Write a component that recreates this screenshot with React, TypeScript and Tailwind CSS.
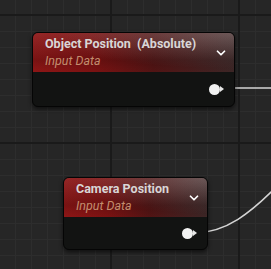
import { ChevronDown } from "lucide-react";

type NodeProps = {
  title: string;
  subtitle: string;
  className: string;
};

function Pin() {
  return (
    <div className="flex items-center">
      <div className="w-[11px] h-[11px] rounded-full bg-[#f2f2f2]" />
      <div className="w-0 h-0 border-y-[3px] border-y-transparent border-l-[4px] border-l-[#e8e8e8]" />
    </div>
  );
}

function MaterialNode({ title, subtitle, className }: NodeProps) {
  return (
    <div
      className={`absolute flex flex-col rounded-[6px] border border-[#050505] bg-[#121312] shadow-[0_2px_4px_rgba(0,0,0,0.6)] ${className}`}
    >
      {/* Header */}
      <div className="relative h-[39px] shrink-0 rounded-t-[5px] overflow-hidden flex items-center justify-between pl-[12px] pr-[6px] bg-[linear-gradient(to_right,#8e1616_0%,#7c1212_30%,#521414_60%,#3c2626_100%)]">
        <div className="absolute inset-0 bg-[radial-gradient(ellipse_at_100%_0%,rgba(140,120,120,0.45),transparent_65%)]" />
        <div className="absolute inset-0 bg-[linear-gradient(to_bottom,rgba(255,255,255,0.07),rgba(0,0,0,0.15)_70%,transparent)]" />
        <div className="relative flex flex-col leading-none">
          <span className="font-['Roboto',sans-serif] font-bold text-[12.5px] text-[#d9d6d6] whitespace-pre">
            {title}
          </span>
          <span className="mt-[4px] font-['Roboto',sans-serif] italic text-[12.5px] text-[#c38d6e]">
            {subtitle}
          </span>
        </div>
        <ChevronDown className="relative w-[14px] h-[14px] text-white" strokeWidth={3} />
      </div>
      {/* Output pin */}
      <div className="flex-1 flex items-center justify-end pr-[10px]">
        <Pin />
      </div>
    </div>
  );
}

export default function App() {
  return (
    <div className="relative w-[271px] h-[269px] overflow-hidden bg-[#262626] [background-image:linear-gradient(to_right,#1a1a1a_2px,transparent_2px),linear-gradient(to_bottom,#1a1a1a_2px,transparent_2px),linear-gradient(to_right,#2d2d2d_1px,transparent_1px),linear-gradient(to_bottom,#2d2d2d_1px,transparent_1px)] [background-size:128px_128px,128px_128px,16px_16px,16px_16px] [background-position:110px_14px,110px_14px,15px_15px,15px_15px]">
      {/* Wires */}
      <svg className="absolute inset-0" width="271" height="269" viewBox="0 0 271 269">
        <path d="M222 88 L271 88" stroke="#d4d4d4" strokeWidth="1.6" fill="none" />
        <path d="M194 233 C225 233, 250 215, 285 178" stroke="#d4d4d4" strokeWidth="1.6" fill="none" />
      </svg>

      <MaterialNode
        title="Object Position  (Absolute)"
        subtitle="Input Data"
        className="left-[32px] top-[32px] w-[203px] h-[75px]"
      />
      <MaterialNode
        title="Camera Position"
        subtitle="Input Data"
        className="left-[63px] top-[177px] w-[145px] h-[73px]"
      />
    </div>
  );
}
